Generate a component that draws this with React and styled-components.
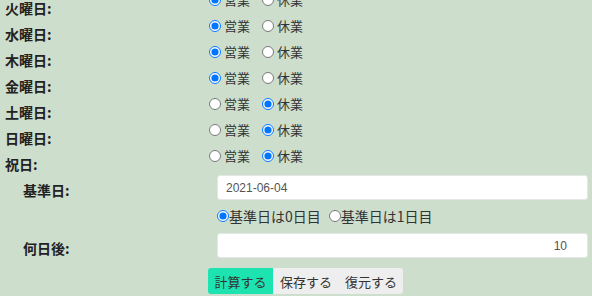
import React from "react";
import styled, { createGlobalStyle } from "styled-components";

const Global = createGlobalStyle`
  html, body { margin: 0; padding: 0; background: #cedecc; overflow: hidden; }
  body { font-family: "Noto Sans CJK JP", "Noto Sans", sans-serif; color: #333; }
`;

const Page = styled.div`
  margin-top: -13px;
  padding-left: 5px;
  width: 583px;
`;

const DayGrid = styled.div`
  display: grid;
  grid-template-columns: 203px 1fr;
  grid-auto-rows: 26px;
`;

const DayLabel = styled.div`
  font-size: 14px;
  font-weight: bold;
  color: #222;
  line-height: 16px;
  margin-top: 13px;
  white-space: nowrap;
`;

const Choices = styled.div`
  display: flex;
  align-items: center;
  height: 26px;
  gap: 12px;
`;

const Choice = styled.label`
  display: flex;
  align-items: center;
  font-size: ${(p) => (p.$tight ? "14px" : "13px")};
  line-height: 18px;
  color: #333;
  gap: ${(p) => (p.$tight ? "0px" : "3px")};
`;

const Radio = styled.input.attrs({ type: "radio" })`
  width: 12px;
  height: 12px;
  margin: 0 0 0 ${(p) => (p.$first ? "1px" : "0")};
  accent-color: #0075ff;
`;

const Settings = styled.div`
  display: grid;
  grid-template-columns: 194px 371px;
  padding-left: 18px;
  margin-top: 6px;
  row-gap: 6px;
  align-items: center;
`;

const FieldLabel = styled.div`
  font-size: 14px;
  font-weight: bold;
  color: #222;
  line-height: 16px;
  padding-top: 5px;
`;

const TextInput = styled.input`
  box-sizing: border-box;
  width: 371px;
  height: 25px;
  border: 1px solid #e4e8e4;
  border-radius: 3px;
  background: #fff;
  font-family: "Liberation Sans", Arial, sans-serif;
  font-size: 12px;
  color: #555;
  padding: 0 20px 0 8px;
  text-align: ${(p) => (p.$right ? "right" : "left")};
  outline: none;
`;

const BaseRow = styled.div`
  grid-column: 2;
  display: flex;
  align-items: center;
  gap: 8px;
  height: 20px;
  margin-bottom: 1px;
`;

const ButtonBar = styled.div`
  display: flex;
  margin: 10px 0 0 203px;
  border-radius: 3px;
  overflow: hidden;
  width: fit-content;
`;

const Button = styled.button`
  height: 26px;
  width: ${(p) => p.$w}px;
  border: none;
  padding: 0;
  font-family: "Noto Sans CJK JP", sans-serif;
  font-size: 13px;
  color: #333;
  background: ${(p) => (p.$primary ? "#1de3b1" : "#eeeeee")};
`;

const days = [
  ["火曜日:", true],
  ["水曜日:", true],
  ["木曜日:", true],
  ["金曜日:", true],
  ["土曜日:", false],
  ["日曜日:", false],
  ["祝日:", false],
];

export default function App() {
  return (
    <>
      <Global />
      <Page>
        <DayGrid>
          {days.map(([label, open], i) => (
            <React.Fragment key={label}>
              <DayLabel>{label}</DayLabel>
              <Choices>
                <Choice>
                  <Radio $first name={`d${i}`} defaultChecked={open} />
                  営業
                </Choice>
                <Choice>
                  <Radio name={`d${i}`} defaultChecked={!open} />
                  休業
                </Choice>
              </Choices>
            </React.Fragment>
          ))}
        </DayGrid>
        <Settings>
          <FieldLabel>基準日:</FieldLabel>
          <TextInput defaultValue="2021-06-04" />
          <BaseRow>
            <Choice $tight>
              <Radio name="base" defaultChecked />
              基準日は0日目
            </Choice>
            <Choice $tight>
              <Radio name="base" />
              基準日は1日目
            </Choice>
          </BaseRow>
          <FieldLabel>何日後:</FieldLabel>
          <TextInput $right defaultValue="10" />
        </Settings>
        <ButtonBar>
          <Button $primary $w={65}>計算する</Button>
          <Button $w={66}>保存する</Button>
          <Button $w={64}>復元する</Button>
        </ButtonBar>
      </Page>
    </>
  );
}
